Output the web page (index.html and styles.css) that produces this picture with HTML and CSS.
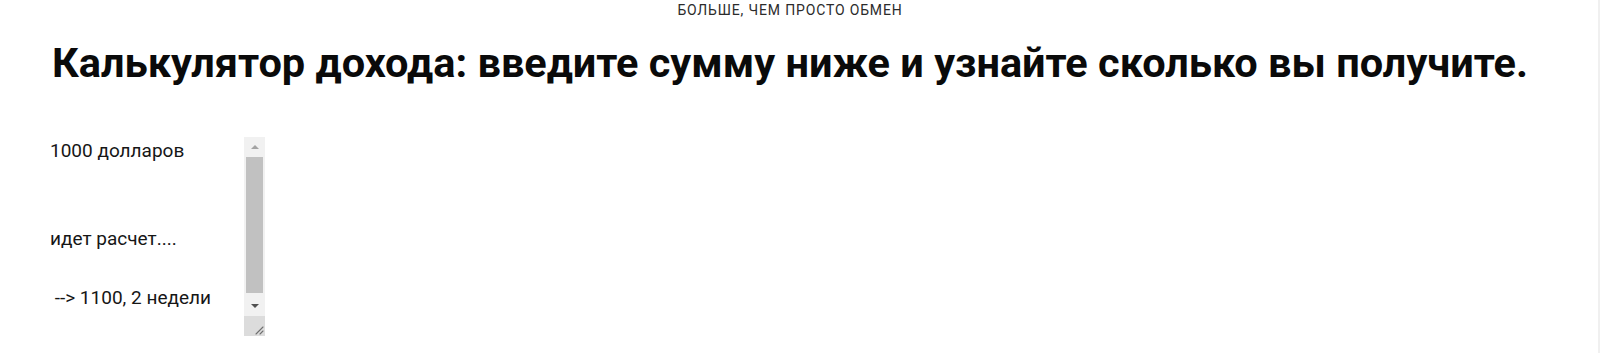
FILE: index.html
```html
<!DOCTYPE html>
<html lang="ru">
<head>
<meta charset="utf-8">
<title>Калькулятор дохода</title>
<link rel="stylesheet" href="styles.css">
</head>
<body>
<main class="page">
  <header class="intro">
    <p class="eyebrow">Больше, чем просто обмен</p>
    <h1 class="title">Калькулятор дохода: введите сумму ниже и узнайте сколько вы получите.</h1>
  </header>
  <section class="calc">
    <div class="calc-box">
      <div class="calc-content">
        <p class="line line-amount">1000 долларов</p>
        <p class="line line-status">идет расчет....</p>
        <p class="line line-result"> --&gt; 1100, 2 недели</p>
      </div>
      <div class="scrollbar" aria-hidden="true">
        <div class="sb-btn sb-up"><span class="tri tri-up"></span></div>
        <div class="sb-track"><div class="sb-thumb"></div></div>
        <div class="sb-btn sb-down"><span class="tri tri-down"></span></div>
        <div class="sb-corner">
          <svg class="grip" width="10" height="10" viewBox="0 0 10 10">
            <path d="M9 2 L2 9 M9 6 L6 9" stroke="#6f6f6f" stroke-width="1.1" fill="none" stroke-linecap="round"/>
          </svg>
        </div>
      </div>
    </div>
  </section>
</main>
</body>
</html>
```
FILE: styles.css
```css
html, body {
  margin: 0;
  padding: 0;
  background: #ffffff;
}
body {
  font-family: Roboto, "Liberation Sans", sans-serif;
  color: #111111;
  min-height: 353px;
  border-right: 2px solid #f0f0f0;
  box-sizing: border-box;
}
.page {
  width: 1580px;
}
.intro {
  text-align: center;
}
.eyebrow {
  margin: 0;
  padding-top: 2px;
  font-size: 14px;
  line-height: 17px;
  letter-spacing: 0.85px;
  text-transform: uppercase;
  color: #2b2b2b;
}
.title {
  margin: 20px 0 0;
  font-family: Roboto, "Liberation Sans", sans-serif;
  font-weight: 700;
  font-size: 41.5px;
  line-height: 48px;
  color: #0a0a0a;
}
.calc {
  padding: 50px 0 0 43px;
}
.calc-box {
  display: grid;
  grid-template-columns: 1fr 21px;
  width: 222px;
  height: 199px;
  background: #ffffff;
}
.calc-content {
  padding: 2px 0 0 7px;
  overflow: hidden;
  font-size: 19px;
  line-height: 23px;
  color: #161616;
}
.line {
  margin: 0;
  white-space: pre;
}
.line-status {
  margin-top: 65px;
}
.line-result {
  margin-top: 36px;
}
.scrollbar {
  display: flex;
  flex-direction: column;
  background: #f1f1f1;
}
.sb-btn {
  height: 20px;
  display: flex;
  align-items: center;
  justify-content: center;
  flex: none;
}
.sb-track {
  flex: 1;
  display: flex;
  padding: 0 2px 3px;
}
.sb-thumb {
  flex: 1;
  background: #c1c1c1;
}
.tri {
  width: 0;
  height: 0;
  border-left: 4px solid transparent;
  border-right: 4px solid transparent;
}
.tri-up {
  border-bottom: 4px solid #a3a3a3;
}
.tri-down {
  border-top: 4px solid #505050;
}
.sb-corner {
  height: 20px;
  flex: none;
  background: #dcdcdc;
  display: flex;
  align-items: flex-end;
  justify-content: flex-end;
}
.grip {
  display: block;
  margin: 0 1px 1px 0;
}
```
